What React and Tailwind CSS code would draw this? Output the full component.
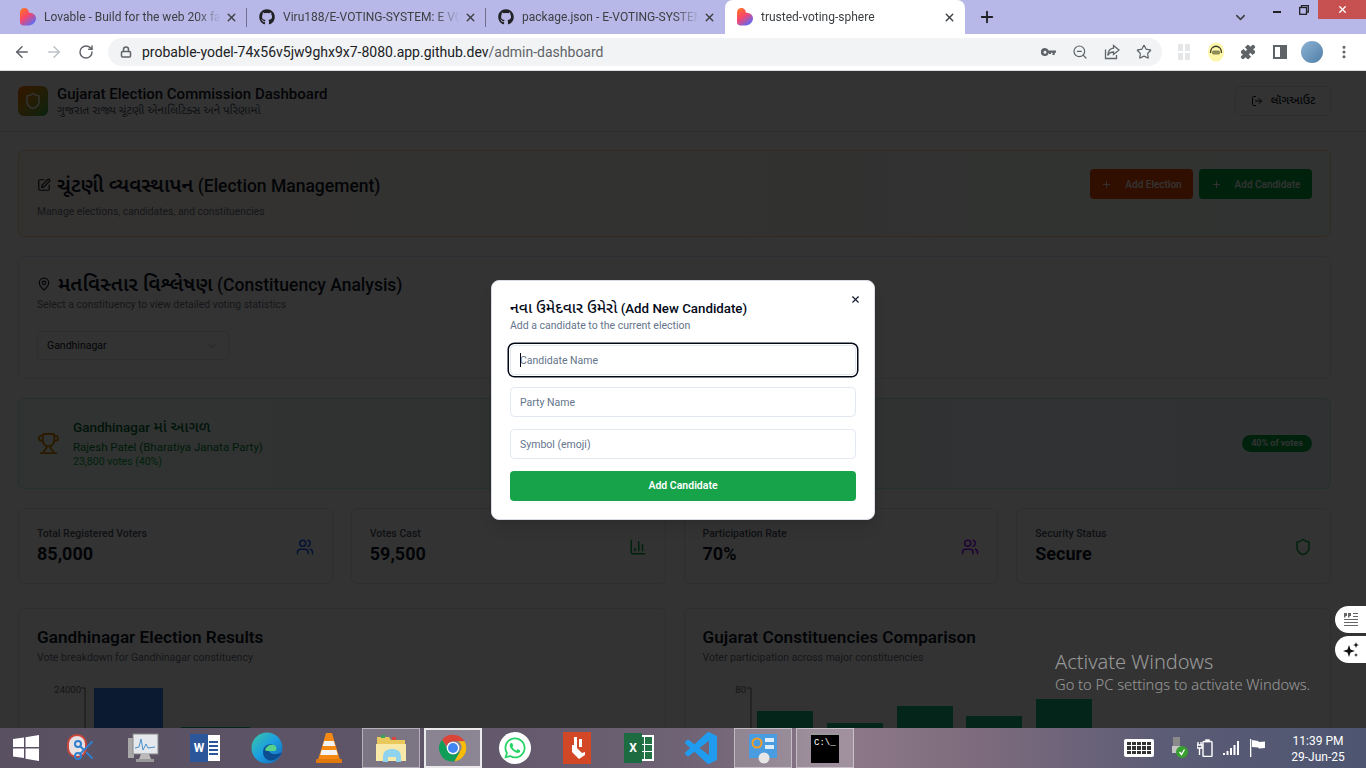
import {
  ArrowLeft, ArrowRight, RotateCw, Lock, ZoomOut, Star, Puzzle, MoreVertical, X, Plus, ChevronDown,
  Shield, LogOut, SquarePen, MapPin, Trophy, Users, ChartColumn, Scissors,
} from 'lucide-react';
import { FaGithub, FaWhatsapp } from 'react-icons/fa';

const UI_FONT = 'font-["Roboto","Noto_Sans","Noto_Sans_Gujarati",sans-serif]';

function LovableIcon() {
  return (
    <svg viewBox="0 0 18 20" className="w-4 h-[18px] shrink-0">
      <defs>
        <linearGradient id="lov" x1="0" y1="0" x2="0.7" y2="1">
          <stop offset="0" stopColor="#ff7a1a" />
          <stop offset="0.5" stopColor="#f8456c" />
          <stop offset="1" stopColor="#5b6cf6" />
        </linearGradient>
      </defs>
      <path d="M5 0c3 0 5 2.400 5 5.200C12.800 5 18 6.500 18 11.500c0 4.500-4 8-8 8H4c-2.500 0-4-1.500-4-4V5c0-3 2.200-5 5-5z" fill="url(#lov)" />
    </svg>
  );
}

function Tab({ icon, title, active, divider }) {
  return (
    <div
      className={`shrink-0 flex items-center pl-3 pr-[9px] ${active ? 'w-[240px] bg-white rounded-t-lg' : 'w-[239px]'} ${divider ? 'relative' : ''}`}
    >
      {icon}
      <span className="ml-2 flex-1 min-w-0 whitespace-nowrap text-[12px] text-[#3c4043] [mask-image:linear-gradient(90deg,#000_86%,transparent)]">
        {title}
      </span>
      <X size={13} strokeWidth={2.5} className="text-[#3c4043] shrink-0 ml-1" />
      {divider && <span className="absolute right-0 top-[8px] h-[19px] w-px bg-[#6f7090]" />}
    </div>
  );
}

function TabStrip() {
  const gh = <FaGithub size={16} className="text-[#202124] shrink-0" />;
  return (
    <div className="h-[34px] bg-[#b7b8e7] flex pl-2">
      <Tab icon={<LovableIcon />} title="Lovable - Build for the web 20x fa" divider />
      <Tab icon={gh} title="Viru188/E-VOTING-SYSTEM: E VC" divider />
      <Tab icon={gh} title="package.json - E-VOTING-SYSTEM" />
      <Tab icon={<LovableIcon />} title="trusted-voting-sphere" active />
      <Plus size={18} strokeWidth={2.5} className="text-[#202124] ml-[13px] mt-[8px] shrink-0" />
      <ChevronDown size={15} strokeWidth={2.5} className="text-[#3c4043] ml-[237px] mt-[10px] shrink-0" />
      <div className="ml-[16px] flex items-start shrink-0">
        <span className="w-[26px] h-[19px] flex justify-center pt-[11px]"><span className="w-[8px] h-[2px] bg-[#202124]" /></span>
        <span className="w-[28px] h-[19px] flex justify-center pt-[5px]">
          <svg width="10" height="10" viewBox="0 0 10 10" fill="none" stroke="#202124" strokeWidth="1.300">
            <path d="M2.500 2.500V.7h6.800v6.500H7.500" />
            <rect x=".7" y="2.500" width="6.800" height="6.800" />
          </svg>
        </span>
        <span className="w-[48px] h-[19px] bg-[#c75050] flex items-center justify-center">
          <X size={11} strokeWidth={3} className="text-white" />
        </span>
      </div>
    </div>
  );
}

function ToolSlot({ children }) {
  return <span className="w-8 h-7 flex items-center justify-center text-[#5f6368] shrink-0">{children}</span>;
}

function Toolbar() {
  return (
    <div className="h-[37px] bg-white border-b border-[#dadce0] flex items-center pl-[6px]">
      <ToolSlot><ArrowLeft size={18} strokeWidth={2} /></ToolSlot>
      <ToolSlot><ArrowRight size={18} strokeWidth={2} className="text-[#bdc1c6]" /></ToolSlot>
      <ToolSlot><RotateCw size={16} strokeWidth={2.2} /></ToolSlot>
      <div className="ml-[6px] w-[1054px] h-7 rounded-full bg-[#f1f3f4] flex items-center pl-3 pr-[2px]">
        <Lock size={12} strokeWidth={3} className="text-[#5f6368] shrink-0" />
        <span className="ml-[10px] flex-1 text-[14px] text-[#202124] whitespace-nowrap">
          probable-yodel-74x56v5jw9ghx9x7-8080.app.github.dev<span className="text-[#5f6368]">/admin-dashboard</span>
        </span>
        <ToolSlot>
          <svg width="15" height="9" viewBox="0 0 15 9" fill="currentColor">
            <path fillRule="evenodd" d="M4 0a4 4 0 0 1 3.700 2.500H15v2.300h-1.300V7h-2.200V4.800H10V6H7.900V4.800h-.2A4 4 0 1 1 4 0zm0 2.800a1.500 1.500 0 1 0 0 3 1.500 1.500 0 0 0 0-3z" />
          </svg>
        </ToolSlot>
        <ToolSlot><ZoomOut size={16} strokeWidth={1.8} /></ToolSlot>
        <ToolSlot>
          <svg width="16" height="16" viewBox="0 0 16 16" fill="none" stroke="currentColor" strokeWidth="1.300">
            <path d="M1.500 5.500v9h11V11" />
            <path d="M9.500 1.500 15 6l-5.500 4.500V8C7 8 5 9 3.800 11.500 4 7.500 6 4.500 9.500 4.200z" />
          </svg>
        </ToolSlot>
        <ToolSlot><Star size={16} strokeWidth={1.8} /></ToolSlot>
      </div>
      <div className="ml-[6px] flex items-center">
        <ToolSlot>
          <span className="grid grid-cols-2 gap-[2px] opacity-20">
            <span className="w-[5px] h-[7px] bg-[#80868b]" />
            <span className="w-[5px] h-[7px] bg-[#80868b]" />
            <span className="w-[5px] h-[7px] bg-[#80868b]" />
            <span className="w-[5px] h-[7px] bg-[#80868b]" />
          </span>
        </ToolSlot>
        <ToolSlot>
          <svg width="16" height="20" viewBox="0 0 16 20">
            <ellipse cx="8" cy="10" rx="8" ry="9.500" fill="#fdf6a8" />
            <path d="M2.500 11C2.500 2 13.500 2 13.500 11" fill="none" stroke="#3a3a2a" strokeWidth="1.300" />
            <rect x="4" y="8.500" width="8" height="4" rx="1.500" fill="#8d8a55" />
          </svg>
        </ToolSlot>
        <ToolSlot><Puzzle size={16} fill="currentColor" strokeWidth={1.5} /></ToolSlot>
        <ToolSlot>
          <span className="w-[14px] h-[14px] border-2 border-[#5f6368] flex justify-end"><span className="w-[5px] bg-[#5f6368]" /></span>
        </ToolSlot>
        <ToolSlot><span className="w-[22px] h-[22px] rounded-full bg-[linear-gradient(135deg,#8eb2d3,#4f7fa8)]" /></ToolSlot>
        <ToolSlot><MoreVertical size={16} strokeWidth={2.6} /></ToolSlot>
      </div>
    </div>
  );
}

function DashHeader() {
  return (
    <header className="h-[61px] bg-white border-b border-gray-200 flex items-center justify-between pl-[18px] pr-[35px]">
      <div className="flex items-center">
        <div className="w-[30px] h-[30px] rounded-md bg-gradient-to-br from-orange-500 to-green-600 flex items-center justify-center">
          <Shield size={18} className="text-white" />
        </div>
        <div className="ml-[9px]">
          <h1 className="text-[15px] leading-[16px] font-medium text-gray-900">Gujarat Election Commission Dashboard</h1>
          <p className="mt-px h-[14px] text-[11.700px] leading-[14px] text-gray-600">ગુજરાત રાજ્ય ચૂંટણી એનાલિટિક્સ અને પરિણામો</p>
        </div>
      </div>
      <button className="w-[96px] h-[30px] rounded border border-gray-200 flex items-center justify-center gap-2 text-[11.500px] font-medium text-gray-900">
        <LogOut size={12} />
        લૉગઆઉટ
      </button>
    </header>
  );
}

function ManageCard() {
  return (
    <section className="rounded-md border border-orange-200 bg-gradient-to-r from-orange-50 to-green-50 p-[18px] pb-[17px] flex justify-between items-start">
      <div className="pt-[5px]">
        <h2 className="h-[22px] flex items-center gap-[6px] text-[17.500px] leading-[22px] font-medium text-gray-900">
          <SquarePen size={14} />
          <span><span className="text-[20.200px] font-semibold">ચૂંટણી વ્યવસ્થાપન</span> (Election Management)</span>
        </h2>
        <p className="mt-[9px] text-[10.300px] leading-[14px] text-gray-500">Manage elections, candidates, and constituencies</p>
      </div>
      <div className="flex gap-[6px]">
        <button className="w-[103px] h-[30px] rounded bg-orange-600 flex items-center justify-center gap-[13px] text-[10px] font-medium text-white">
          <Plus size={11} />
          Add Election
        </button>
        <button className="w-[113px] h-[30px] rounded bg-green-600 flex items-center justify-center gap-[13px] text-[10px] font-medium text-white">
          <Plus size={11} />
          Add Candidate
        </button>
      </div>
    </section>
  );
}

function ConstituencyCard() {
  return (
    <section className="mt-[19px] rounded-md border border-blue-100 bg-white p-[18px]">
      <h2 className="h-[18px] flex items-center gap-[7px] text-[17.500px] leading-[18px] font-medium text-gray-900">
        <MapPin size={14} />
        <span><span className="text-[20px] font-semibold">મતવિસ્તાર વિશ્લેષણ</span> (Constituency Analysis)</span>
      </h2>
      <p className="mt-[5px] text-[10.400px] leading-[14px] text-gray-500">Select a constituency to view detailed voting statistics</p>
      <div className="mt-[19px] w-[192px] h-[29px] rounded border border-gray-200 flex items-center justify-between pl-[9px] pr-[10px] text-[10.5px] text-gray-900">
        Gandhinagar
        <ChevronDown size={12} className="text-gray-400" />
      </div>
    </section>
  );
}

function LeaderCard() {
  return (
    <section className="mt-[19px] h-[91px] rounded-md border border-green-200 bg-gradient-to-r from-green-50 to-blue-50 px-[18px] flex items-center justify-between">
      <div className="flex items-center">
        <Trophy size={23} className="text-yellow-600" />
        <div className="ml-[13px]">
          <h3 className="h-[17px] text-[13.500px] leading-[17px] font-medium text-green-800">Gandhinagar <span className="text-[15.300px]">માં આગળ</span></h3>
          <p className="mt-[3px] text-[11.500px] leading-[16px] text-green-700">Rajesh Patel (Bharatiya Janata Party)</p>
          <p className="text-[10.5px] leading-[14px] text-green-600">23,800 votes (40%)</p>
        </div>
      </div>
      <span className="w-[70px] h-[17px] rounded-full bg-green-600 flex items-center justify-center text-[9px] font-semibold text-white">40% of votes</span>
    </section>
  );
}

function StatCard({ label, value, icon }) {
  return (
    <div className="h-[76px] rounded-md border border-gray-200 bg-white pl-[18px] pr-[18px] pt-[18px] flex justify-between">
      <div>
        <p className="text-[10.5px] leading-[14px] font-medium text-gray-600">{label}</p>
        <p className="mt-px text-[18px] leading-[24px] font-bold text-gray-900">{value}</p>
      </div>
      <span className="mt-[11px]">{icon}</span>
    </div>
  );
}

function ChartCard({ title, subtitle, children }) {
  return (
    <div className="h-[200px] rounded-md border border-gray-200 bg-white p-[18px]">
      <h3 className="text-[17.200px] leading-[20px] font-semibold text-gray-900">{title}</h3>
      <p className="mt-[4px] text-[10.5px] leading-[14px] text-gray-500">{subtitle}</p>
      {children}
    </div>
  );
}

function ResultsChart() {
  return (
    <svg width="300" height="60" className="mt-[15px] block">
      <text x="44" y="13" textAnchor="end" fontSize="9.500" fill="#666">24000</text>
      <path d="M44 8h4v52" fill="none" stroke="#666" />
      <rect x="57" y="8" width="69" height="52" fill="#3b82f6" />
      <rect x="144" y="47" width="69" height="13" fill="#10b981" />
    </svg>
  );
}

function CompareChart() {
  const bars = [[54, 31], [124, 43], [194, 26], [263, 36], [333, 19]];
  return (
    <svg width="400" height="60" className="mt-[15px] block">
      <text x="43" y="13" textAnchor="end" fontSize="9.500" fill="#666">80</text>
      <path d="M44 8h4v52" fill="none" stroke="#666" />
      {bars.map(([x, y]) => (
        <rect key={x} x={x} y={y} width="56" height={60 - y} fill="#10b981" />
      ))}
    </svg>
  );
}

function Dashboard() {
  return (
    <div className="bg-white">
      <DashHeader />
      <div className="pl-[18px] pr-[35px] pt-[18px]">
        <ManageCard />
        <ConstituencyCard />
        <LeaderCard />
        <div className="mt-[19px] grid grid-cols-4 gap-[18px]">
          <StatCard label="Total Registered Voters" value="85,000" icon={<Users size={18} className="text-blue-600" />} />
          <StatCard label="Votes Cast" value="59,500" icon={<ChartColumn size={18} className="text-green-600" />} />
          <StatCard label="Participation Rate" value="70%" icon={<Users size={18} className="text-purple-600" />} />
          <StatCard label="Security Status" value="Secure" icon={<Shield size={18} className="text-green-600" />} />
        </div>
        <div className="mt-[24px] grid grid-cols-2 gap-[18px]">
          <ChartCard title="Gandhinagar Election Results" subtitle="Vote breakdown for Gandhinagar constituency">
            <ResultsChart />
          </ChartCard>
          <ChartCard title="Gujarat Constituencies Comparison" subtitle="Voter participation across major constituencies">
            <CompareChart />
          </ChartCard>
        </div>
      </div>
    </div>
  );
}

function AddCandidateDialog() {
  const field = 'block w-full h-[30px] rounded-[4.500px] border border-[#e2e8f0] bg-white px-[9px] text-[10.5px] placeholder:text-[#64748b] outline-none';
  return (
    <div className="absolute left-[491px] top-[209px] w-[384px] h-[240px] rounded-lg bg-white border border-[#d8dde5] p-[18px] shadow-lg">
      <X size={11} strokeWidth={2.4} className="absolute right-[13px] top-[13px] text-[#0f172a]" />
      <h2 className="text-[13.300px] leading-[18px] font-medium text-[#020817]"><span className="text-[15.500px]">નવા ઉમેદવાર ઉમેરો</span> (Add New Candidate)</h2>
      <p className="mt-px text-[10.5px] leading-[14px] text-[#64748b]">Add a candidate to the current election</p>
      <div className="mt-[12px] flex flex-col gap-3">
        <div className="relative">
          <input placeholder="Candidate Name" className={`${field} ring-[1.500px] ring-[#020817] ring-offset-[1px]`} />
          <span className="absolute left-[10px] top-[8px] w-px h-[14px] bg-[#020817]" />
        </div>
        <input placeholder="Party Name" className={field} />
        <input placeholder="Symbol (emoji)" className={field} />
        <button className="h-[30px] rounded bg-[#16a34a] text-[10.5px] font-semibold text-white">Add Candidate</button>
      </div>
    </div>
  );
}

function ChromeLogo() {
  return (
    <svg viewBox="0 0 48 48" className="w-[32px] h-[32px]">
      <path d="M24 4a20 20 0 0 1 17.300 10H24a10 10 0 0 0-9.500 6.900L7.600 11.500A20 20 0 0 1 24 4z" fill="#db4437" />
      <path d="M41.300 14A20 20 0 0 1 26 43.900L34.700 29A10 10 0 0 0 32 14z" fill="#fbbc05" />
      <path d="M26 43.900A20 20 0 0 1 7.600 11.500l8.700 15A10 10 0 0 0 26 34l8.700-5z" fill="#0f9d58" />
      <circle cx="24" cy="24" r="9.500" fill="#fff" />
      <circle cx="24" cy="24" r="7.500" fill="#4285f4" />
    </svg>
  );
}

function Slot({ boxed, bright, children }) {
  return (
    <div
      className={`w-[58px] h-[40px] flex items-center justify-center ${boxed ? 'border border-[#ffffff70] bg-[#ffffff30]' : ''} ${bright ? 'border-2 border-[#ffffffd0] bg-[#ffffff45]' : ''}`}
    >
      {children}
    </div>
  );
}

function Taskbar() {
  return (
    <div className="h-[40px] shrink-0 flex items-center bg-[linear-gradient(90deg,#595062_0%,#5e5568_30%,#6e6274_50%,#8c7888_62%,#7d6b7d_72%,#5c5c76_85%,#4d5570_100%)]">
      <div className="w-[52px] flex justify-center">
        <svg width="26" height="26" viewBox="0 0 26 26" fill="#fff">
          <path d="M0 4l11-1.500V12H0zM12.500 2.300 26 0v12H12.500zM0 13.500h11V23L0 21.500zM12.500 13.500H26V26l-13.500-2.300z" />
        </svg>
      </div>
      <div className="flex gap-1">
        <Slot>
          <span className="relative w-[28px] h-[32px]">
            <span className="absolute left-0 top-[2px] w-[20px] h-[24px] rounded-full bg-[#e9e1e1] border-2 border-[#c9463d]" />
            <Scissors size={24} className="absolute left-[5px] top-[6px] text-[#2f7fd0]" />
          </span>
        </Slot>
        <Slot>
          <svg width="32" height="32" viewBox="0 0 32 32">
            <rect x="1" y="6" width="6" height="20" fill="#a9a9a9" />
            <rect x="6" y="2" width="25" height="20" fill="#e4e8ec" stroke="#888" />
            <path d="M8 16l4-1 2-8 2 11 3-6 2 4 7-1" fill="none" stroke="#4a90c9" />
            <path d="M14 22h8l2 5h-12z" fill="#bbb" />
            <rect x="9" y="27" width="18" height="3" fill="#999" />
          </svg>
        </Slot>
        <Slot>
          <span className="relative w-[30px] h-[28px] flex justify-end">
            <span className="w-[20px] h-[26px] mt-[1px] bg-white flex flex-col justify-center gap-[2px] pl-[9px] pr-[2px]">
              <span className="h-[2px] bg-[#2b579a]" />
              <span className="h-[2px] bg-[#2b579a]" />
              <span className="h-[2px] bg-[#2b579a]" />
              <span className="h-[2px] bg-[#2b579a]" />
            </span>
            <span className="absolute left-0 top-0 w-[18px] h-[28px] bg-[#2b579a] flex items-center justify-center text-[12px] font-bold text-white">W</span>
          </span>
        </Slot>
        <Slot>
          <svg width="32" height="32" viewBox="0 0 32 32">
            <defs>
              <linearGradient id="edge" x1="0" y1="0" x2="1" y2="1">
                <stop offset="0" stopColor="#3bc8a4" />
                <stop offset="0.5" stopColor="#1b9de2" />
                <stop offset="1" stopColor="#1565b0" />
              </linearGradient>
            </defs>
            <circle cx="16" cy="16" r="15.500" fill="url(#edge)" />
            <path d="M31 20c-2 6-9 10-14 8-5-2-6-8-4-12 2-4 8-5 11-2 2 2 1 5-1 5h-5c1 3 7 5 13 1z" fill="#0c4d92" />
            <path d="M14 18c1-4 5-6 9-5 3 1 3 5 1 6h-8c-1 0-2-1-2-1z" fill="#56d28a" />
          </svg>
        </Slot>
        <Slot>
          <svg width="26" height="32" viewBox="0 0 26 32">
            <path d="M10 1h6l8 27H2z" fill="#f58a13" />
            <path d="M8.200 9h9.600l1.500 5H6.700zM5.500 18h15l1.200 5H4.300z" fill="#f4f4f4" />
            <rect x="0" y="27" width="26" height="4" rx="1" fill="#e07a0c" />
          </svg>
        </Slot>
        <Slot boxed>
          <svg width="32" height="32" viewBox="0 0 32 32">
            <path d="M2 5h12l2 3h14v16H2z" fill="#e9c85c" />
            <path d="M1 12h30v17H1z" fill="#f8e9a8" />
            <path d="M8 25c0-6 4-8 9-8s9 2 9 8v5h-5v-5h-8v5H8z" fill="#8fd3ef" />
            <rect x="6" y="3" width="4" height="3" fill="#3aa655" />
            <rect x="17" y="5" width="4" height="3" fill="#d8453b" />
          </svg>
        </Slot>
        <Slot bright><ChromeLogo /></Slot>
        <Slot>
          <span className="w-[32px] h-[32px] rounded-full bg-white flex items-center justify-center">
            <FaWhatsapp size={24} className="text-[#25d366]" />
          </span>
        </Slot>
        <Slot>
          <span className="w-[28px] h-[32px] bg-[#d24726] flex items-center justify-center">
            <svg width="18" height="24" viewBox="0 0 18 24" fill="#fff">
              <path d="M6 1h3v11l5 5 3-1v3l-6 4-7-7V9h2zM11 3h3v8h-3z" />
            </svg>
          </span>
        </Slot>
        <Slot>
          <span className="relative w-[30px] h-[30px] flex justify-end">
            <span className="w-[20px] h-[26px] mt-[2px] bg-white grid grid-cols-2 gap-[1px] p-[2px]">
              <span className="bg-[#217346]" /><span className="bg-[#217346]" />
              <span className="bg-[#217346]" /><span className="bg-[#217346]" />
              <span className="bg-[#217346]" /><span className="bg-[#217346]" />
            </span>
            <span className="absolute left-0 top-0 w-[18px] h-[30px] bg-[#1d6b40] flex items-center justify-center text-[12px] font-bold text-white">X</span>
          </span>
        </Slot>
        <Slot>
          <svg width="32" height="32" viewBox="0 0 24 24" fill="#1f9cf0">
            <path d="M23.150 2.587 18.210.210a1.494 1.494 0 0 0-1.705.290l-9.460 8.630-4.120-3.128a.999.999 0 0 0-1.276.057L.327 7.261A1 1 0 0 0 .326 8.740L3.899 12 .326 15.260a1 1 0 0 0 .001 1.479L1.650 17.940a.999.999 0 0 0 1.276.057l4.120-3.128 9.460 8.630a1.492 1.492 0 0 0 1.704.290l4.942-2.377A1.500 1.500 0 0 0 24 20.060V3.939a1.500 1.500 0 0 0-.850-1.352zm-5.146 14.861L10.826 12l7.178-5.448v10.896z" />
          </svg>
        </Slot>
        <Slot boxed>
          <svg width="32" height="32" viewBox="0 0 32 32">
            <rect x="2" y="2" width="28" height="24" fill="#4a9ce0" />
            <circle cx="10" cy="11" r="4.500" fill="none" stroke="#f59d23" strokeWidth="2" />
            <rect x="18" y="6" width="9" height="4" fill="#dcecf8" />
            <rect x="18" y="13" width="9" height="4" fill="#dcecf8" />
            <circle cx="17" cy="26" r="5.500" fill="#e6e6e6" />
          </svg>
        </Slot>
        <Slot boxed>
          <span className="w-[28px] h-[30px] bg-black border-t-2 border-[#999] pl-[3px] pt-[4px] font-['Liberation_Mono',monospace] text-[9px] leading-none text-white">C:\_</span>
        </Slot>
      </div>
      <div className="ml-auto flex items-center text-white">
        <span className="w-[30px] h-[18px] mr-[15px] bg-white rounded-[2px] grid grid-cols-5 gap-[1px] p-[3px]">
          {Array.from({ length: 15 }).map((_, i) => <span key={i} className="bg-[#333]" />)}
        </span>
        <svg width="20" height="22" viewBox="0 0 20 22" className="mr-[8px]">
          <rect x="4" y="0" width="7" height="9" fill="#8a8a8a" />
          <rect x="3" y="9" width="9" height="7" fill="#c4c4c4" />
          <circle cx="13" cy="15" r="6" fill="#37a02f" />
          <path d="M10.500 15l2 2.500 3-5" fill="none" stroke="#fff" strokeWidth="1.300" />
        </svg>
        <svg width="16" height="18" viewBox="0 0 16 18" fill="none" stroke="#fff" strokeWidth="1.400" className="mr-[10px]">
          <rect x="6" y="2.500" width="9" height="15" rx="1" />
          <path d="M1 3v3M4 3v3M0 6h5v3H0zM2.500 9v7" />
          <rect x="9" y="1" width="3" height="1.500" fill="#fff" />
        </svg>
        <svg width="16" height="14" viewBox="0 0 16 14" fill="#fff" className="mr-[10px]">
          <path d="M0 12h2v2H0zM3.500 10h2v4h-2zM7 7h2v7H7zM10.500 4h2v10h-2zM14 0h2v14h-2z" />
        </svg>
        <svg width="16" height="18" viewBox="0 0 16 18" fill="#fff" className="mr-[23px]">
          <path d="M1 0h1.300v18H1zM3 1l6 1 1 1 6-.5V9l-6 .5-1-1-6-.5z" />
        </svg>
        <div className="w-[60px] mr-[18px] mt-px text-center text-[12px] leading-[16px]">
          <div>11:39 PM</div>
          <div>29-Jun-25</div>
        </div>
      </div>
    </div>
  );
}

export default function App() {
  return (
    <div className={`w-[1366px] h-screen overflow-hidden flex flex-col ${UI_FONT}`}>
      <TabStrip />
      <Toolbar />
      <main className="relative flex-1 min-h-0 overflow-hidden bg-white">
        <Dashboard />
        <div className="absolute inset-0 bg-black/80" />
        <AddCandidateDialog />
        <div className="absolute right-0 top-[535px] w-[31px] h-[27px] rounded-l-full bg-white flex items-center justify-center">
          <svg width="14" height="13" viewBox="0 0 14 13" fill="#666">
            <path d="M0 0h3v3H1.500v1.500H0zM4 0h3v3H5.500v1.500H4zM9 0h5v1H9zM9 3h5v1H9zM0 6h14v1H0zM0 9h14v1H0zM0 12h14v1H0z" />
          </svg>
        </div>
        <div className="absolute right-0 top-[565px] w-[31px] h-[27px] rounded-l-full bg-white flex items-center justify-center">
          <svg width="16" height="16" viewBox="0 0 16 16" fill="#111">
            <path d="M6 3l1.500 4.500L12 9l-4.500 1.500L6 15l-1.500-4.500L0 9l4.500-1.500zM13 0l.8 2.200L16 3l-2.200.8L13 6l-.8-2.200L10 3l2.200-.8zM13 11l.6 1.400L15 13l-1.400.6L13 15l-.6-1.400L11 13l1.400-.6z" />
          </svg>
        </div>
        <div className={`absolute left-[1055px] top-[578px] text-[#ffffff80] font-light font-["Noto_Sans",sans-serif]`}>
          <div className="text-[20px] leading-[26px]">Activate Windows</div>
          <div className="text-[14.700px] leading-[19px]">Go to PC settings to activate Windows.</div>
        </div>
      </main>
      <Taskbar />
    </div>
  );
}
